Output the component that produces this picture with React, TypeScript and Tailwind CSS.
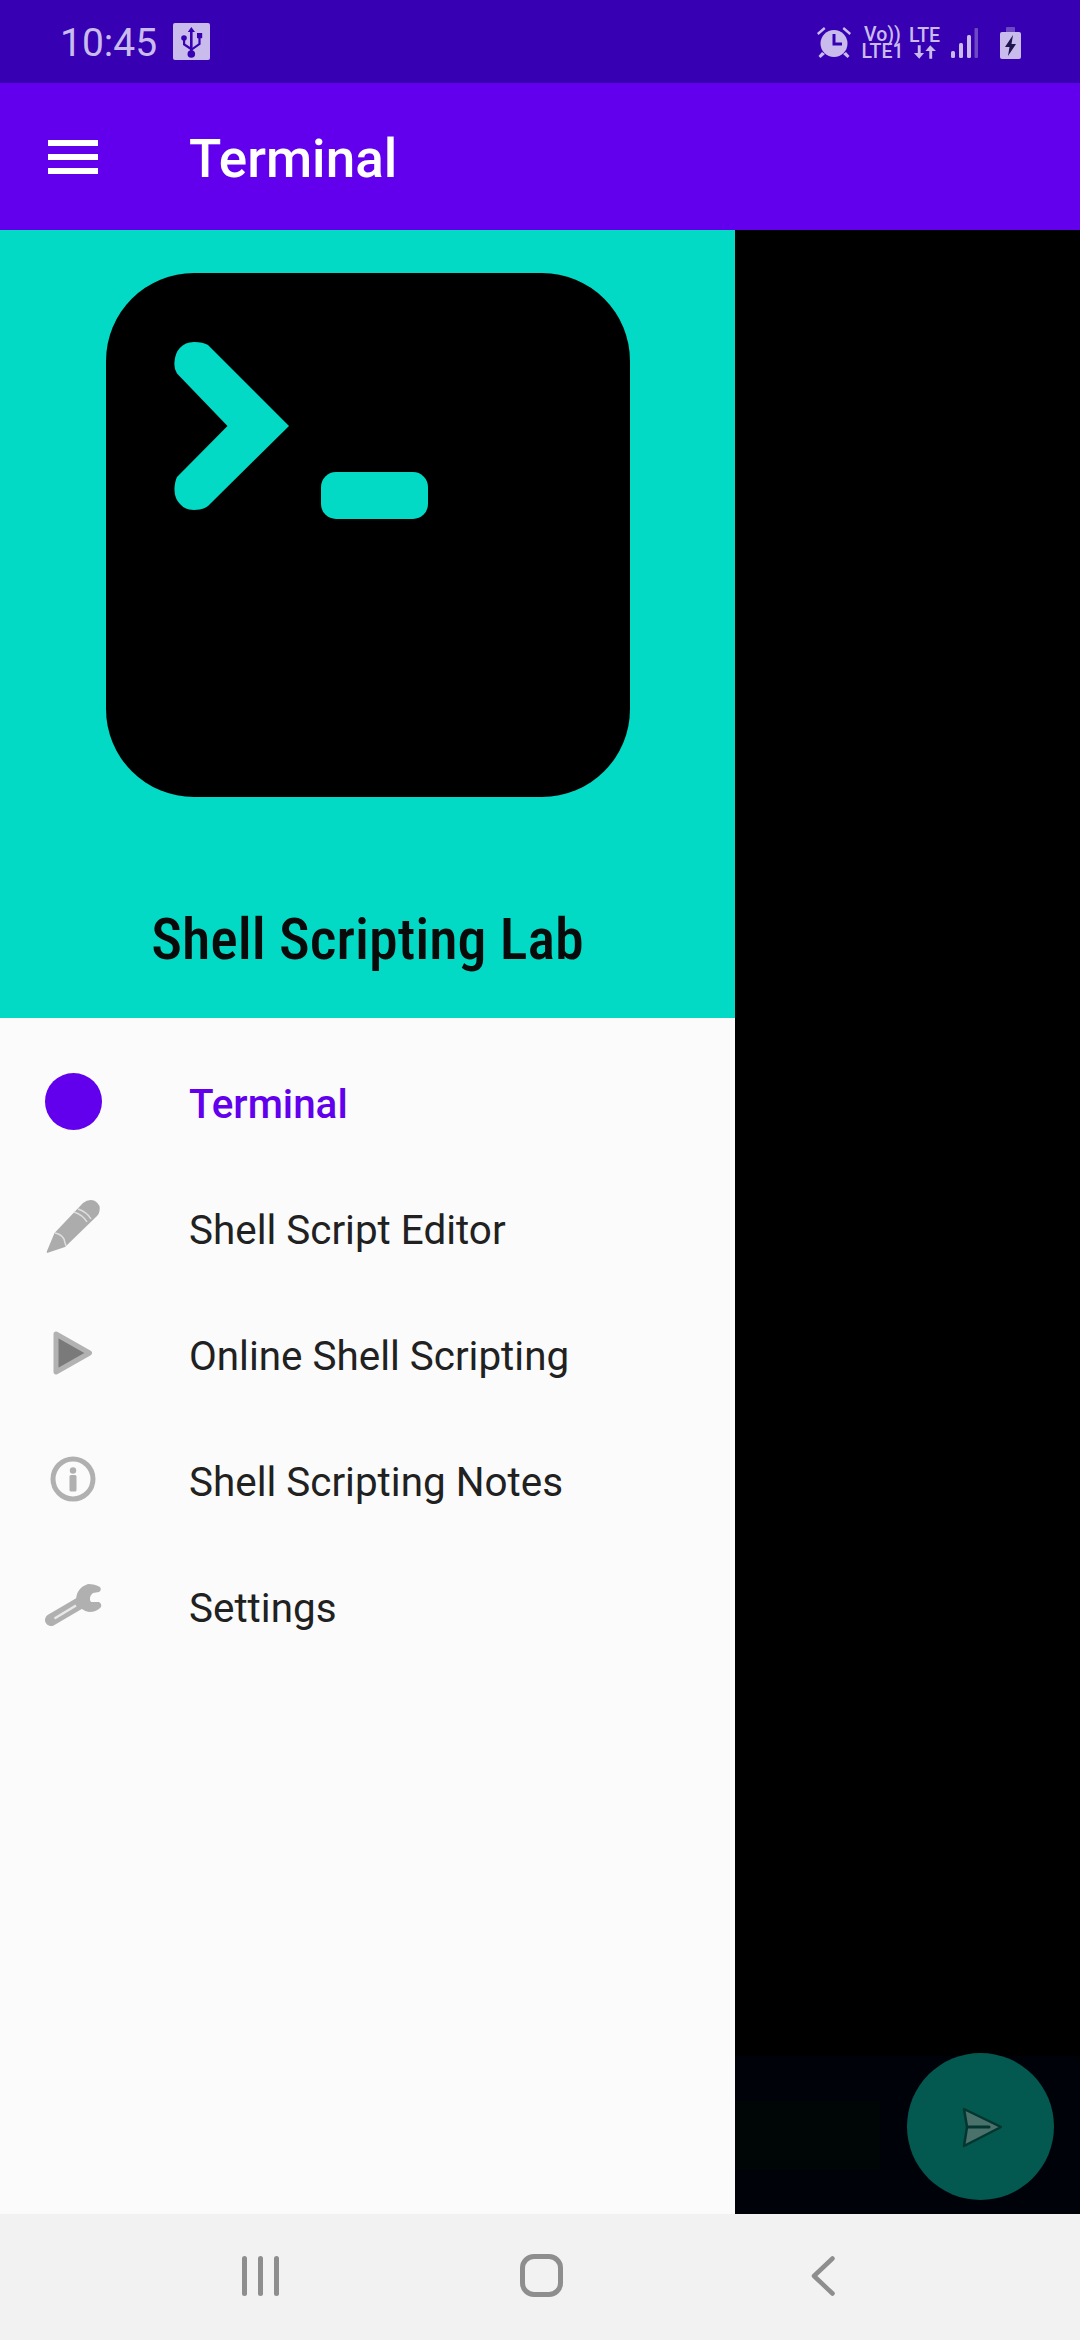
const items = [
  { label: "Terminal", icon: <div className="w-[57px] h-[57px] rounded-full bg-[#6200ee]" />, active: true },
  {
    label: "Shell Script Editor",
    icon: (
      <svg width="60" height="60" viewBox="0 0 60 60">
        <path d="M4 56 Q3.5 55 4 54 L11.5 36 L40 6 Q46 1.5 52 4 Q58 8 56.5 14 Q56 17 54 19 L22 50 Z" fill="#acacac" />
        <path d="M12 36 Q18 37 21 42 Q22 46 23 49 M31 15 Q40 18 44 25 M35 12 Q44 15 48 22" fill="none" stroke="#dedede" strokeWidth="1.5" />
      </svg>
    ),
  },
  {
    label: "Online Shell Scripting",
    icon: (
      <svg width="60" height="60" viewBox="0 0 60 60">
        <path d="M13 11 L46.5 30 L13 49 Z" fill="#7a7a7a" stroke="#b2b2b2" strokeWidth="5" strokeLinejoin="round" />
      </svg>
    ),
  },
  {
    label: "Shell Scripting Notes",
    icon: (
      <svg width="60" height="60" viewBox="0 0 60 60">
        <circle cx="30" cy="30" r="20" fill="none" stroke="#b0b0b0" strokeWidth="5" />
        <rect x="26.5" y="26" width="7" height="16.5" rx="1.5" fill="#b0b0b0" />
        <circle cx="30" cy="21.5" r="3.2" fill="#b0b0b0" />
      </svg>
    ),
  },
  {
    label: "Settings",
    icon: (
      <svg width="60" height="60" viewBox="0 0 60 60">
        <path d="M8 45 L37 28" stroke="#b0b0b0" strokeWidth="12" strokeLinecap="round" fill="none" />
        <path d="M11.5 43.5 L33 30.5" stroke="#e8e8e8" strokeWidth="2.5" fill="none" />
        <path d="M33 26 Q33 13 45 9 Q52 9 57 12 Q59 15 56 17 L50 18 Q45 22 48 27 L56 27 Q59 29 58 32 Q54 37 46 37 Q38 36 33 26 Z" fill="#b0b0b0" />
      </svg>
    ),
  },
];

export default function App() {
  return (
    <div className="w-[1080px] h-[2340px] flex flex-col overflow-hidden bg-black font-['Roboto',sans-serif]">
      {/* status bar */}
      <div className="h-[83px] shrink-0 bg-[#3700b3] flex items-center justify-between pl-[60px] pr-[59px] text-[#c9bcec]">
        <div className="flex items-center gap-[16px]">
          <span className="text-[39px] leading-none font-normal mt-[4px]">10:45</span>
          <div className="w-[37px] h-[37px] rounded-[2px] bg-[#c9bcec]">
            <svg width="37" height="37" viewBox="0 0 37 37" fill="#3700b3">
              <path d="M18.3 4 L22 9 H19.6 V30 H17 V9 H14.8 Z" />
              <path d="M17.5 27 L10 22 V15 H12.2 V20.8 L18 24.6 Z" />
              <circle cx="11" cy="15" r="2.8" />
              <path d="M19 25 L25.4 20.5 V14 H27.6 V21.6 L19 27.4 Z" />
              <rect x="24" y="10" width="5.2" height="5.2" />
              <circle cx="18.3" cy="31" r="3.8" />
            </svg>
          </div>
        </div>
        <div className="flex items-center mt-[2px]">
          <svg width="34" height="31" viewBox="0 0 34 31" fill="#c9bcec" className="mr-[12px]">
            <path d="M0 6 L7 0 L8.5 2 L1.5 8 Z M34 6 L27 0 L25.5 2 L32.5 8 Z" />
            <path d="M5 25 L1.5 29 L3.5 31 L8 27 Z M29 25 L32.5 29 L30.5 31 L26 27 Z" />
            <circle cx="17" cy="16.5" r="13.5" />
            <path d="M15.5 7 H18.5 V15.5 H25 V18.5 H15.5 Z" fill="#3700b3" />
          </svg>
          <div className="flex flex-col items-center text-[19.5px] font-medium w-[39px] mr-[7px]">
            <span className="h-[17px] leading-[17px]">Vo))</span>
            <span className="h-[17px] leading-[17px]">LTE1</span>
          </div>
          <div className="flex flex-col items-center w-[31px] mr-[11px]">
            <span className="h-[18px] leading-[18px] text-[19.5px] font-medium">LTE</span>
            <svg width="23" height="14" viewBox="0 0 24 14" fill="#c9bcec">
              <path d="M5 0 H8 V8 H11.5 L6.5 14 L1 8 H5 Z" />
              <path d="M18 0 L24 6 H20 V14 H17 V6 H13 Z" />
            </svg>
          </div>
          <svg width="27" height="30" viewBox="0 0 27 30" className="mr-[22px]">
            <rect x="0" y="23" width="4" height="7" rx="1.5" fill="#c9bcec" />
            <rect x="8" y="15" width="4" height="15" rx="1.5" fill="#c9bcec" />
            <rect x="16" y="7" width="4" height="23" rx="1.5" fill="#c9bcec" />
            <rect x="23.5" y="0" width="3.5" height="30" rx="1" fill="#6d49c4" />
          </svg>
          <svg width="21" height="32" viewBox="0 0 21 32">
            <rect x="6" y="0" width="9" height="6" rx="1" fill="#6d49c4" />
            <rect x="0" y="5" width="21" height="27" rx="2" fill="#c9bcec" />
            <path d="M13 8 L5 20 H9.5 L8 29 L16 17 H11.5 Z" fill="#1d1450" />
          </svg>
        </div>
      </div>

      {/* app bar */}
      <div className="h-[147px] shrink-0 bg-[#6200ee] flex items-center pl-[48px]">
        <div className="w-[50px] flex flex-col gap-[8px]">
          <div className="h-[6px] bg-white" />
          <div className="h-[6px] bg-white" />
          <div className="h-[6px] bg-white" />
        </div>
        <span className="ml-[91px] mt-[5px] text-[53px] leading-none font-medium text-white">Terminal</span>
      </div>

      {/* content */}
      <div className="flex-1 flex min-h-0">
        <div className="w-[735px] shrink-0 flex flex-col bg-[#fbfbfb]">
          <div className="h-[788px] bg-[#03dac5] flex flex-col items-center pt-[42px]">
            <svg width="526" height="526" viewBox="0 0 526 526" className="ml-[1px] shrink-0">
              <rect x="1" y="1" width="524" height="524" rx="88" fill="#000" />
              <path
                d="M74.8 76 Q80 70 89 70 Q98 70 103 73 L184 154 L103 234 Q98 238 89 238 Q80 238 75 232 Q69 226 69.5 216 Q70 209 72 205 L122.5 154 L72 101.6 Q69 97 69.4 90.7 Q70 81 74.8 76 Z"
                fill="#03dac5"
              />
              <rect x="216" y="200" width="107" height="47" rx="15" fill="#03dac5" />
            </svg>
            <span className="mt-[112px] text-[58px] leading-none font-medium text-[#0a0a0a] [font-stretch:75%] whitespace-nowrap">
              Shell Scripting Lab
            </span>
          </div>
          <div className="flex flex-col pt-[53px]">
            {items.map((it) => (
              <div key={it.label} className="h-[126px] flex items-start">
                <div className="w-[190px] pl-[43px] shrink-0 flex">
                  <div className="w-[60px] h-[60px] flex items-center justify-center">{it.icon}</div>
                </div>
                <span className={`mt-[11px] -ml-[1px] text-[40.4px] leading-[46px] ${it.active ? "text-[#6200ee] font-medium" : "text-[#212121]"}`}>
                  {it.label}
                </span>
              </div>
            ))}
          </div>
        </div>
        <div className="flex-1 flex flex-col">
          <div className="flex-1" />
          <div className="h-[158px] bg-[#000209] flex items-center relative">
            <div className="w-[145px] h-[69px] bg-[#000506]" />
            <div className="absolute left-[172px] top-[-3px] w-[147px] h-[147px] rounded-full bg-[#03594f] flex items-center justify-center">
              <svg width="42" height="42" viewBox="0 0 42 42">
                <path d="M4 3 L41 21 L4 40 L7 21 Z" fill="#4a716c" stroke="#03362f" strokeWidth="2.5" strokeLinejoin="round" />
                <path d="M8 21 H29" stroke="#03362f" strokeWidth="3" strokeLinecap="round" />
              </svg>
            </div>
          </div>
        </div>
      </div>

      {/* nav bar */}
      <div className="h-[126px] shrink-0 bg-[#f2f2f2] relative flex items-center justify-center">
        <div className="absolute left-[242px] top-[42px] flex gap-[11px]">
          <div className="w-[5px] h-[40px] rounded-full bg-[#8e8e8e]" />
          <div className="w-[5px] h-[40px] rounded-full bg-[#8e8e8e]" />
          <div className="w-[5px] h-[40px] rounded-full bg-[#8e8e8e]" />
        </div>
        <div className="absolute left-[520px] top-[40px] w-[43px] h-[43px] rounded-[14px] border-[5px] border-[#8e8e8e]" />
        <svg width="30" height="44" viewBox="0 0 30 44" className="absolute left-[808px] top-[40px]">
          <path d="M24.5 4.5 L6 22 L24.5 39.5" fill="none" stroke="#8e8e8e" strokeWidth="4.5" strokeLinecap="round" strokeLinejoin="round" />
        </svg>
      </div>
    </div>
  );
}
